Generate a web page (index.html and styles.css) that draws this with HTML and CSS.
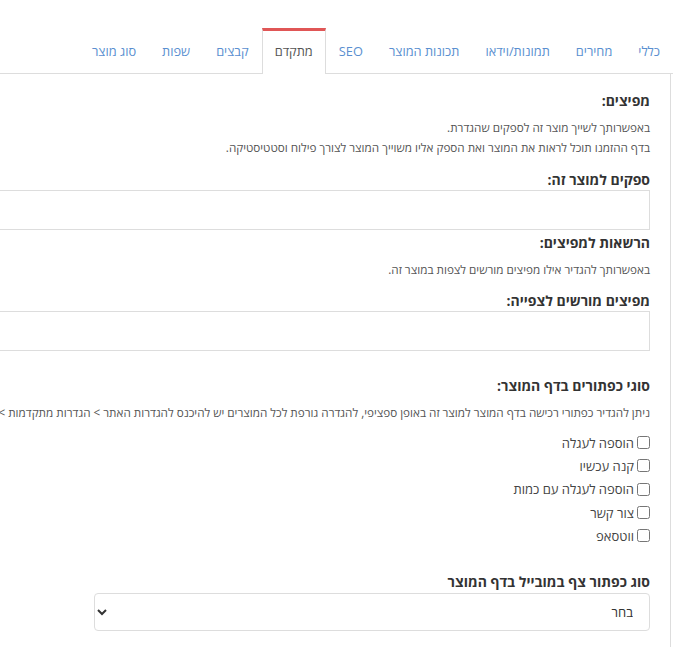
FILE: index.html
```html
<!DOCTYPE html>
<html lang="he" dir="rtl">
<head>
    <meta charset="UTF-8">
    <meta name="viewport" content="width=device-width, initial-scale=1.0">
    <title>עריכת מוצר - מתקדם</title>
    <link rel="stylesheet" href="styles.css">
</head>
<body>
    <div class="product-edit">
        <!-- לשוניות -->
        <ul class="tabs">
            <li><a href="#">כללי</a></li>
            <li><a href="#">מחירים</a></li>
            <li><a href="#">תמונות/וידאו</a></li>
            <li><a href="#">תכונות המוצר</a></li>
            <li><a href="#">SEO</a></li>
            <li class="active"><a href="#">מתקדם</a></li>
            <li><a href="#">קבצים</a></li>
            <li><a href="#">שפות</a></li>
            <li><a href="#">סוג מוצר</a></li>
        </ul>

        <div class="tab-pane">
            <!-- מפיצים -->
            <h4 class="section-title">מפיצים:</h4>
            <p class="hint hint-first">באפשרותך לשייך מוצר זה לספקים שהגדרת.</p>
            <p class="hint">בדף ההזמנו תוכל לראות את המוצר ואת הספק אליו משוייך המוצר לצורך פילוח וסטטיסטיקה.</p>

            <div class="field field-suppliers">
                <label class="field-label">ספקים למוצר זה:</label>
                <input type="text" class="text-input">
            </div>

            <h4 class="section-title title-permissions">הרשאות למפיצים:</h4>
            <p class="hint hint-first">באפשרותך להגדיר אילו מפיצים מורשים לצפות במוצר זה.</p>

            <div class="field field-allowed">
                <label class="field-label">מפיצים מורשים לצפייה:</label>
                <input type="text" class="text-input">
            </div>

            <!-- כפתורים -->
            <h4 class="section-title title-buttons">סוגי כפתורים בדף המוצר:</h4>
            <p class="hint hint-first nowrap">ניתן להגדיר כפתורי רכישה בדף המוצר למוצר זה באופן ספציפי, להגדרה גורפת לכל המוצרים יש להיכנס להגדרות האתר &gt; הגדרות מתקדמות &gt; כפתורי רכישה בדף המוצר.</p>

            <div class="checks">
                <label class="check"><input type="checkbox"> הוספה לעגלה</label>
                <label class="check"><input type="checkbox"> קנה עכשיו</label>
                <label class="check"><input type="checkbox"> הוספה לעגלה עם כמות</label>
                <label class="check"><input type="checkbox"> צור קשר</label>
                <label class="check"><input type="checkbox"> ווטסאפ</label>
            </div>

            <div class="field field-mobile">
                <label class="field-label">סוג כפתור צף במובייל בדף המוצר</label>
                <select class="select-input">
                    <option>בחר</option>
                </select>
            </div>
        </div>
    </div>
</body>
</html>
```

FILE: styles.css
```css
html, body {
    margin: 0;
    padding: 0;
    overflow: hidden;
    background: #fff;
}

body {
    font-family: 'Open Sans', 'Liberation Sans', sans-serif;
    color: #333;
}

.product-edit {
    width: 1100px;
    margin-right: 21px;
    padding-top: 28px;
}

/* לשוניות */
.tabs {
    list-style: none;
    margin: 0 -2px 0 0;
    padding: 0;
    display: flex;
    border-bottom: 1px solid #ddd;
}

.tabs li {
    margin-bottom: -1px;
}

.tabs a {
    display: block;
    padding: 0 13px;
    height: 42px;
    line-height: 41px;
    border-top: 3px solid transparent;
    color: #5a8fd0;
    font-size: 12.8px;
    text-decoration: none;
}

.tabs li.active a {
    border-top-color: #e05656;
    border-left: 1px solid #ddd;
    border-right: 1px solid #ddd;
    background: #fff;
    color: #555;
    padding: 0 12px;
    height: 43px;
}

.tab-pane {
    border-right: 1px solid #ddd;
    padding: 17px 20px 40px 0;
}

.section-title {
    margin: 0;
    font-size: 14px;
    line-height: 20px;
    font-weight: bold;
    color: #333;
}

.hint {
    margin: 0;
    font-size: 11.7px;
    line-height: 20px;
    color: #555;
}

.hint-first {
    margin-top: 6px;
}

.nowrap {
    white-space: nowrap;
}

.field-label {
    display: block;
    font-size: 14px;
    line-height: 20px;
    font-weight: bold;
    color: #333;
}

.field-suppliers {
    margin-top: 13px;
}

.field-allowed {
    margin-top: 12px;
}

.text-input {
    display: block;
    box-sizing: border-box;
    width: 100%;
    height: 40px;
    margin-top: 0;
    border: 1px solid #ddd;
    background: #fff;
}

.title-permissions {
    margin-top: 3px;
}

.title-buttons {
    margin-top: 25px;
}

.checks {
    margin-top: 9px;
}

.check {
    display: flex;
    align-items: center;
    height: 23.3px;
    font-size: 13px;
    color: #444;
}

.check input {
    margin: 0 0 0 3px;
    width: 13px;
    height: 13px;
}

.field-mobile {
    margin-top: 25px;
}

.select-input {
    display: block;
    margin-top: 1px;
    width: 556px;
    height: 38px;
    padding: 0 12px;
    border: 1px solid #ddd;
    border-radius: 4px;
    background: #fff;
    font-family: inherit;
    font-size: 13px;
    color: #333;
}
```
